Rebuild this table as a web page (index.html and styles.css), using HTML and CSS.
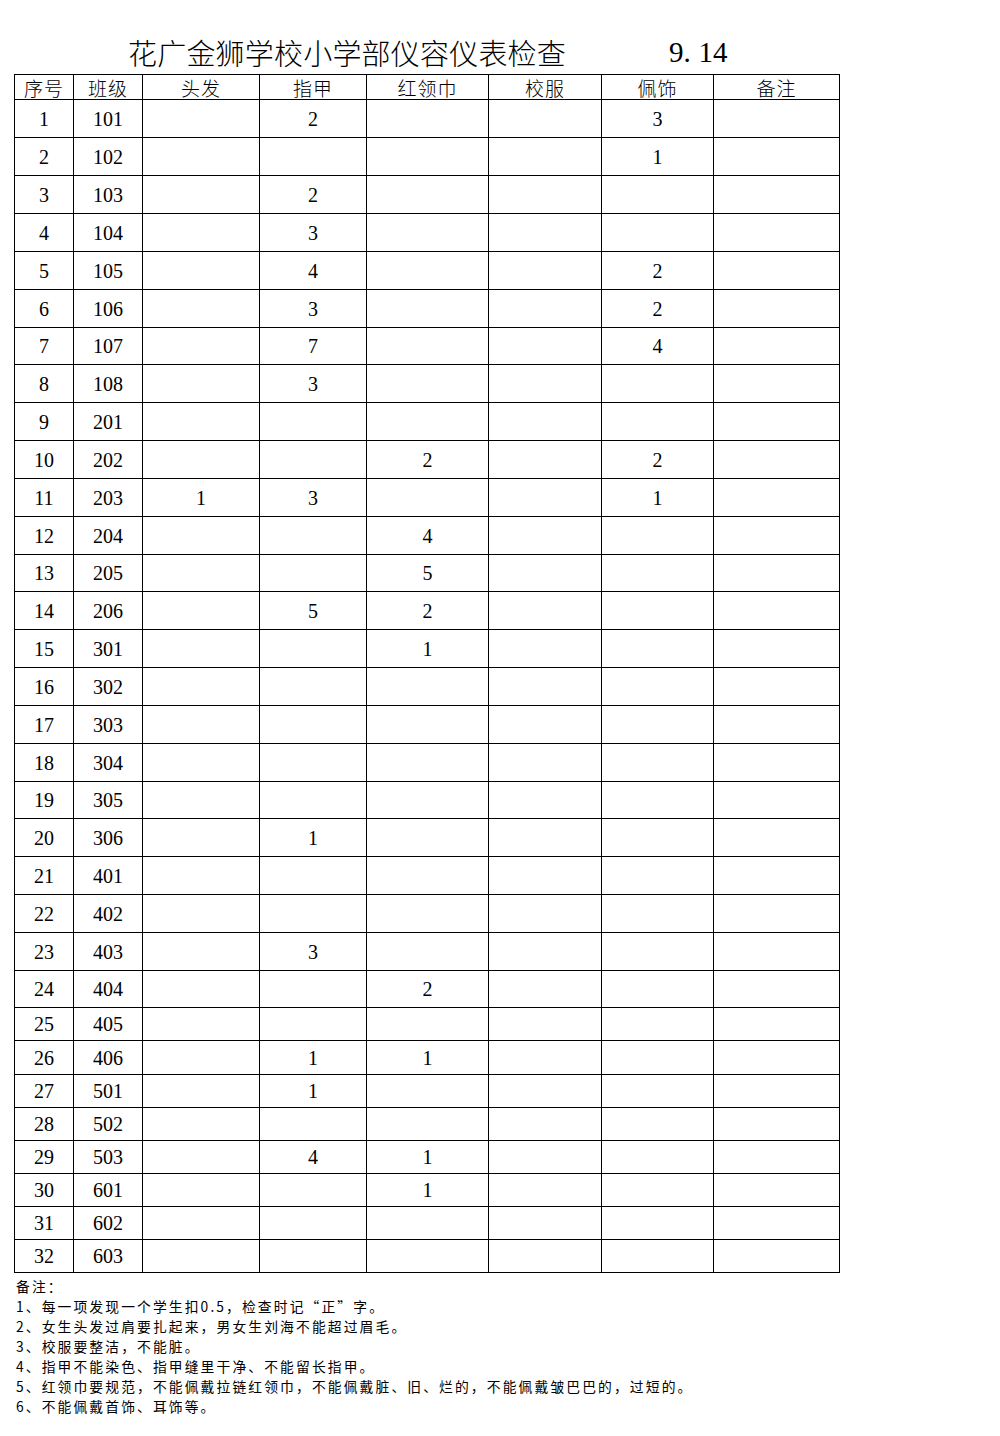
FILE: index.html
```html
<!DOCTYPE html>
<html lang="zh-CN">
<head>
<meta charset="utf-8">
<title>花广金狮学校小学部仪容仪表检查</title>
<link rel="stylesheet" href="styles.css">
</head>
<body>
<div class="sheet">
  <div class="title-row">
    <span class="title">花广金狮学校小学部仪容仪表检查</span>
    <span class="date">9<span class="dot">.</span>14</span>
  </div>
  <table class="grid">
    <colgroup>
      <col class="c-no"><col class="c-cls"><col class="c-hair"><col class="c-nail"><col class="c-scarf"><col class="c-uni"><col class="c-acc"><col class="c-note">
    </colgroup>
    <thead>
      <tr class="head"><th>序号</th><th>班级</th><th>头发</th><th>指甲</th><th>红领巾</th><th>校服</th><th>佩饰</th><th>备注</th></tr>
    </thead>
    <tbody>
      <tr class="r38"><td>1</td><td>101</td><td></td><td>2</td><td></td><td></td><td>3</td><td></td></tr>
      <tr class="r38"><td>2</td><td>102</td><td></td><td></td><td></td><td></td><td>1</td><td></td></tr>
      <tr class="r38"><td>3</td><td>103</td><td></td><td>2</td><td></td><td></td><td></td><td></td></tr>
      <tr class="r38"><td>4</td><td>104</td><td></td><td>3</td><td></td><td></td><td></td><td></td></tr>
      <tr class="r38"><td>5</td><td>105</td><td></td><td>4</td><td></td><td></td><td>2</td><td></td></tr>
      <tr class="r38"><td>6</td><td>106</td><td></td><td>3</td><td></td><td></td><td>2</td><td></td></tr>
      <tr class="r37"><td>7</td><td>107</td><td></td><td>7</td><td></td><td></td><td>4</td><td></td></tr>
      <tr class="r38"><td>8</td><td>108</td><td></td><td>3</td><td></td><td></td><td></td><td></td></tr>
      <tr class="r38"><td>9</td><td>201</td><td></td><td></td><td></td><td></td><td></td><td></td></tr>
      <tr class="r38"><td>10</td><td>202</td><td></td><td></td><td>2</td><td></td><td>2</td><td></td></tr>
      <tr class="r38"><td>11</td><td>203</td><td>1</td><td>3</td><td></td><td></td><td>1</td><td></td></tr>
      <tr class="r38"><td>12</td><td>204</td><td></td><td></td><td>4</td><td></td><td></td><td></td></tr>
      <tr class="r37"><td>13</td><td>205</td><td></td><td></td><td>5</td><td></td><td></td><td></td></tr>
      <tr class="r38"><td>14</td><td>206</td><td></td><td>5</td><td>2</td><td></td><td></td><td></td></tr>
      <tr class="r38"><td>15</td><td>301</td><td></td><td></td><td>1</td><td></td><td></td><td></td></tr>
      <tr class="r38"><td>16</td><td>302</td><td></td><td></td><td></td><td></td><td></td><td></td></tr>
      <tr class="r38"><td>17</td><td>303</td><td></td><td></td><td></td><td></td><td></td><td></td></tr>
      <tr class="r38"><td>18</td><td>304</td><td></td><td></td><td></td><td></td><td></td><td></td></tr>
      <tr class="r37"><td>19</td><td>305</td><td></td><td></td><td></td><td></td><td></td><td></td></tr>
      <tr class="r38"><td>20</td><td>306</td><td></td><td>1</td><td></td><td></td><td></td><td></td></tr>
      <tr class="r38"><td>21</td><td>401</td><td></td><td></td><td></td><td></td><td></td><td></td></tr>
      <tr class="r38"><td>22</td><td>402</td><td></td><td></td><td></td><td></td><td></td><td></td></tr>
      <tr class="r38"><td>23</td><td>403</td><td></td><td>3</td><td></td><td></td><td></td><td></td></tr>
      <tr class="r37"><td>24</td><td>404</td><td></td><td></td><td>2</td><td></td><td></td><td></td></tr>
      <tr class="r33"><td>25</td><td>405</td><td></td><td></td><td></td><td></td><td></td><td></td></tr>
      <tr class="r34"><td>26</td><td>406</td><td></td><td>1</td><td>1</td><td></td><td></td><td></td></tr>
      <tr class="r33"><td>27</td><td>501</td><td></td><td>1</td><td></td><td></td><td></td><td></td></tr>
      <tr class="r33"><td>28</td><td>502</td><td></td><td></td><td></td><td></td><td></td><td></td></tr>
      <tr class="r33"><td>29</td><td>503</td><td></td><td>4</td><td>1</td><td></td><td></td><td></td></tr>
      <tr class="r33"><td>30</td><td>601</td><td></td><td></td><td>1</td><td></td><td></td><td></td></tr>
      <tr class="r33"><td>31</td><td>602</td><td></td><td></td><td></td><td></td><td></td><td></td></tr>
      <tr class="r33"><td>32</td><td>603</td><td></td><td></td><td></td><td></td><td></td><td></td></tr>
    </tbody>
  </table>
  <div class="notes">
    <p>备注：</p>
    <p>1、每一项发现一个学生扣0.5，检查时记“正”字。</p>
    <p>2、女生头发过肩要扎起来，男女生刘海不能超过眉毛。</p>
    <p>3、校服要整洁，不能脏。</p>
    <p>4、指甲不能染色、指甲缝里干净、不能留长指甲。</p>
    <p>5、红领巾要规范，不能佩戴拉链红领巾，不能佩戴脏、旧、烂的，不能佩戴皱巴巴的，过短的。</p>
    <p>6、不能佩戴首饰、耳饰等。</p>
  </div>
</div>
</body>
</html>
```

FILE: styles.css
```css
html, body {
  margin: 0;
  padding: 0;
  background: #ffffff;
  color: #000000;
}

body {
  font-family: "Liberation Serif", "Noto Sans CJK SC", serif;
}

.sheet {
  padding: 30px 0 0 14px;
}

.title-row {
  display: flex;
  align-items: center;
  height: 44px;
  padding-left: 114px;
  box-sizing: border-box;
}

.title {
  font-family: "Noto Sans CJK SC", sans-serif;
  font-weight: 300;
  font-size: 29px;
  line-height: 44px;
  letter-spacing: 0.2px;
}

.date {
  margin-left: 103px;
  font-family: "Liberation Serif", serif;
  font-size: 29px;
  line-height: 44px;
}

.date .dot {
  display: inline-block;
  width: 15px;
}

.grid {
  border-collapse: collapse;
  table-layout: fixed;
  width: 825px;
}

.c-no { width: 59px; }
.c-cls { width: 69px; }
.c-hair { width: 117px; }
.c-nail { width: 107px; }
.c-scarf { width: 122px; }
.c-uni { width: 113px; }
.c-acc { width: 112px; }
.c-note { width: 126px; }

.grid th,
.grid td {
  border: 1px solid #000000;
  padding: 0;
  text-align: center;
  vertical-align: middle;
}

.grid th {
  font-family: "Noto Sans CJK SC", sans-serif;
  font-weight: 300;
  font-size: 19px;
  letter-spacing: 1px;
  line-height: 22px;
  padding-top: 2px;
}

.grid td {
  font-family: "Liberation Serif", serif;
  font-size: 20px;
  line-height: 20px;
}

.head { height: 25px; }
.r38 { height: 38px; }
.r37 { height: 37px; }
.r34 { height: 34px; }
.r33 { height: 33px; }

.notes {
  font-family: "Noto Sans CJK SC", sans-serif;
  font-size: 13.8px;
  letter-spacing: 2.1px;
  line-height: 20px;
  padding-top: 3px;
  padding-left: 2px;
}

.notes p {
  margin: 0;
}
```
